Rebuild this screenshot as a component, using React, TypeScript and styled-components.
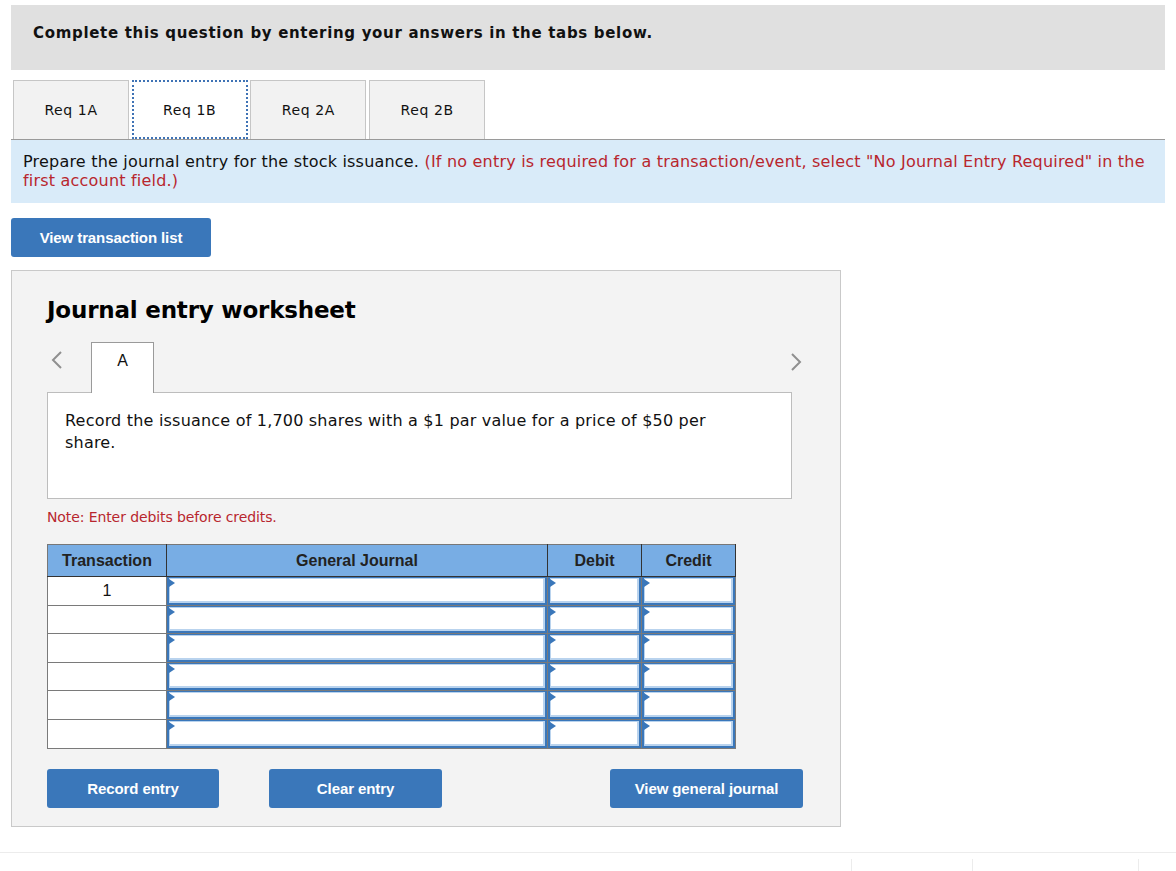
import React from "react";
import styled, { createGlobalStyle } from "styled-components";

const Global = createGlobalStyle`
  html, body { margin: 0; padding: 0; background: #fff; }
  body { font-family: "DejaVu Sans", Verdana, sans-serif; color: #111; }
  * { box-sizing: border-box; }
`;

const Page = styled.div`
  padding: 5px 11px 0 11px;
  width: 1176px;
  height: 871px;
  overflow: hidden;
  position: relative;
`;

const Banner = styled.div`
  background: #e0e0e0;
  height: 65px;
  display: flex;
  align-items: center;
  padding: 0 0 10px 22px;
  font-weight: bold;
  font-size: 15px;
  letter-spacing: 0.68px;
`;

const TabRow = styled.div`
  margin-top: 10px;
  display: flex;
  padding-left: 2px;
  border-bottom: 1px solid #9a9a9a;
  height: 60px;
`;

const Tab = styled.div<{ $active?: boolean }>`
  width: 116px;
  height: 59px;
  margin-right: 2.7px;
  display: flex;
  align-items: center;
  justify-content: center;
  font-size: 14px;
  letter-spacing: 0.6px;
  color: #111;
  background: ${(p) => (p.$active ? "#fff" : "#f2f2f2")};
  border: ${(p) => (p.$active ? "2px dotted #3f73b5" : "1px solid #c6c6c6")};
  border-bottom: ${(p) => (p.$active ? "2px dotted #3f73b5" : "none")};
`;

const Instruction = styled.div`
  background: #d9ebf9;
  padding: 12px 12px 13px 12px;
  font-size: 16px;
  line-height: 19px;
  letter-spacing: 0.2px;
`;

const Red = styled.span`
  color: #b8262e;
`;

const BlueButton = styled.button<{ $w: number }>`
  width: ${(p) => p.$w}px;
  height: 39px;
  border: none;
  border-radius: 3px;
  background: #3a77ba;
  color: #fff;
  font-family: "Liberation Sans", Arial, sans-serif;
  font-weight: bold;
  font-size: 15px;
  letter-spacing: -0.1px;
  cursor: pointer;
  padding: 0;
`;

const TopButtonWrap = styled.div`
  margin-top: 15px;
  height: 39px;
  display: flex;
`;

const Panel = styled.div`
  margin-top: 13px;
  width: 830px;
  height: 557px;
  background: #f3f3f3;
  border: 1px solid #c9c9c9;
  padding: 0 0 0 35px;
`;

const Title = styled.h2`
  margin: 24px 0 0 0;
  font-size: 23px;
  letter-spacing: -0.2px;
  font-weight: bold;
  line-height: 30px;
  color: #000;
`;

const NavRow = styled.div`
  margin-top: 17px;
  height: 50px;
  width: 757px;
  display: flex;
  align-items: flex-start;
`;

const Chevron = styled.div<{ $right?: boolean }>`
  width: 44px;
  height: 50px;
  display: flex;
  align-items: center;
  justify-content: ${(p) => (p.$right ? "flex-end" : "flex-start")};
  padding-left: ${(p) => (p.$right ? "0" : "4px")};
  padding-right: ${(p) => (p.$right ? "2px" : "0")};
  padding-bottom: ${(p) => (p.$right ? "10px" : "14px")};
  color: #8f8f8f;
`;

const Spacer = styled.div`
  flex: 1;
`;

const EntryTab = styled.div`
  width: 63px;
  height: 51px;
  background: #fff;
  border: 1px solid #9a9a9a;
  border-bottom: none;
  display: flex;
  justify-content: center;
  padding-top: 9px;
  font-size: 16px;
  font-family: "Liberation Sans", Arial, sans-serif;
  position: relative;
  z-index: 1;
`;

const DescBox = styled.div`
  width: 745px;
  height: 107px;
  background: #fff;
  border: 1px solid #bdbdbd;
  padding: 17px 17px 0 17px;
  font-size: 16px;
  line-height: 22px;
  letter-spacing: 0.2px;
  color: #111;
`;

const DescText = styled.div`
  width: 660px;
`;

const Note = styled.div`
  margin-top: 10px;
  font-size: 14px;
  line-height: 17px;
  letter-spacing: -0.1px;
  color: #b8262e;
`;

const Table = styled.table`
  margin-top: 18px;
  border-collapse: collapse;
  font-family: "Liberation Sans", Arial, sans-serif;
`;

const Th = styled.th<{ $w: number }>`
  width: ${(p) => p.$w}px;
  height: 32px;
  background: #78ade4;
  border: 1px solid #333;
  border-top-color: #777;
  border-left-color: #777;
  font-size: 16px;
  font-weight: bold;
  color: #222;
  padding: 0;
  text-align: center;
`;

const Td = styled.td`
  height: 28.6px;
  background: #fff;
  border: 1px solid #7a7a7a;
  padding: 0;
  font-size: 16px;
  text-align: center;
  color: #111;
`;

const InputTd = styled.td`
  height: 28.6px;
  background: #fff;
  border: 1px solid #7a7a7a;
  padding: 0;
`;

const Field = styled.div`
  position: relative;
  height: 27.6px;
  border-left: 2px solid #3a77ba;
  border-top: 1px solid #3a77ba;
  border-bottom: 2px solid #3a77ba;
  border-right: 2px solid #3a77ba;
  box-shadow: inset 1px 1px 0 #b9d3ee, inset -2px -2px 0 #b9d3ee;
  background: #fff;
`;

const Flag = styled.span`
  position: absolute;
  left: 0;
  top: 1px;
  width: 0;
  height: 0;
  border-top: 4px solid transparent;
  border-bottom: 4px solid transparent;
  border-left: 6px solid #3a77ba;
`;

const ButtonRow = styled.div`
  margin-top: 20px;
  width: 756px;
  display: flex;
  gap: 50px;
`;

const Push = styled.div`
  flex: 1;
`;

const Footer = styled.div`
  position: absolute;
  left: 0;
  right: 0;
  top: 852px;
  height: 19px;
  border-top: 1px solid #ececec;
`;

const FooterTick = styled.span`
  position: absolute;
  top: 6px;
  width: 1px;
  height: 13px;
  background: #ececec;
`;

const ChevronIcon = ({ right }: { right?: boolean }) => (
  <svg width="12" height="20" viewBox="0 0 12 20">
    <path
      d={right ? "M2 2 L10 10 L2 18" : "M10 2 L2 10 L10 18"}
      fill="none"
      stroke="#8f8f8f"
      strokeWidth="2"
    />
  </svg>
);

const InputCell = () => (
  <InputTd>
    <Field>
      <Flag />
    </Field>
  </InputTd>
);

export default function App() {
  const rows = [1, 2, 3, 4, 5, 6];
  return (
    <>
      <Global />
      <Page>
        <Banner>Complete this question by entering your answers in the tabs below.</Banner>
        <TabRow>
          <Tab>Req 1A</Tab>
          <Tab $active>Req 1B</Tab>
          <Tab>Req 2A</Tab>
          <Tab>Req 2B</Tab>
        </TabRow>
        <Instruction>
          Prepare the journal entry for the stock issuance.{" "}
          <Red>
            (If no entry is required for a transaction/event, select "No Journal Entry Required" in the
            first account field.)
          </Red>
        </Instruction>
        <TopButtonWrap>
          <BlueButton $w={200}>View transaction list</BlueButton>
        </TopButtonWrap>
        <Panel>
          <Title>Journal entry worksheet</Title>
          <NavRow>
            <Chevron>
              <ChevronIcon />
            </Chevron>
            <EntryTab>A</EntryTab>
            <Spacer />
            <Chevron $right>
              <ChevronIcon right />
            </Chevron>
          </NavRow>
          <DescBox>
            <DescText>
              Record the issuance of 1,700 shares with a $1 par value for a price of $50 per share.
            </DescText>
          </DescBox>
          <Note>Note: Enter debits before credits.</Note>
          <Table>
            <thead>
              <tr>
                <Th $w={119}>Transaction</Th>
                <Th $w={381}>General Journal</Th>
                <Th $w={94}>Debit</Th>
                <Th $w={94}>Credit</Th>
              </tr>
            </thead>
            <tbody>
              {rows.map((r) => (
                <tr key={r}>
                  <Td>{r === 1 ? "1" : ""}</Td>
                  <InputCell />
                  <InputCell />
                  <InputCell />
                </tr>
              ))}
            </tbody>
          </Table>
          <ButtonRow>
            <BlueButton $w={172}>Record entry</BlueButton>
            <BlueButton $w={173}>Clear entry</BlueButton>
            <Push />
            <BlueButton $w={193}>View general journal</BlueButton>
          </ButtonRow>
        </Panel>
        <Footer>
          <FooterTick style={{ left: 851 }} />
          <FooterTick style={{ left: 972 }} />
          <FooterTick style={{ left: 1138 }} />
        </Footer>
      </Page>
    </>
  );
}
